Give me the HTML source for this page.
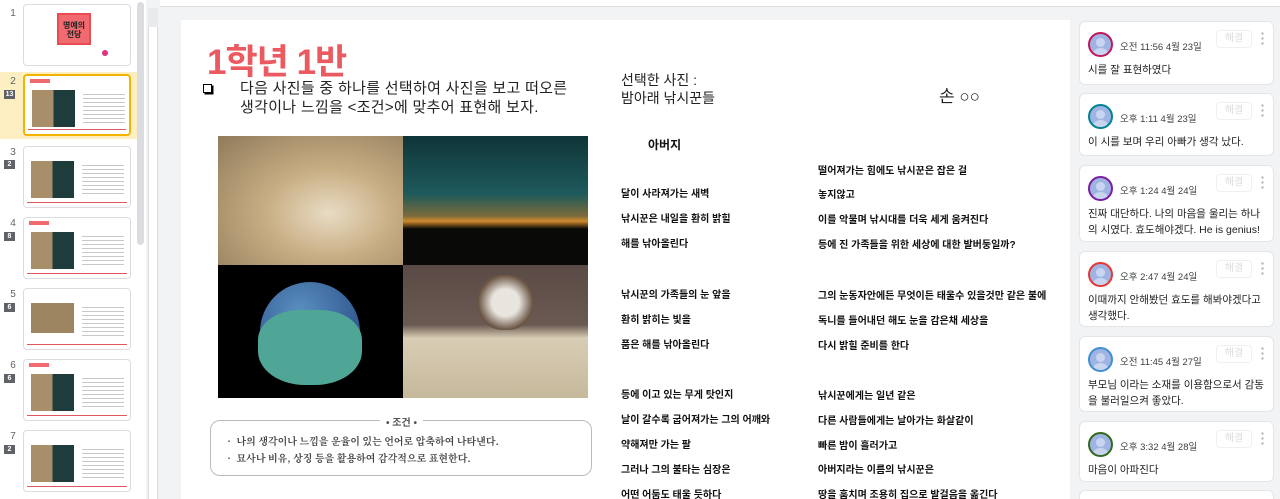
<!DOCTYPE html>
<html><head><meta charset="utf-8"><style>
*{margin:0;padding:0;box-sizing:border-box}
html,body{width:1280px;height:499px;overflow:hidden}
body{background:#f1f3f4;position:relative;font-family:"Liberation Sans","Noto Sans CJK KR",sans-serif}
.abs{position:absolute}
.film{left:0;top:0;width:146px;height:499px;background:#fff}
.num{font-size:10px;color:#5f6368;left:8px;width:10px;text-align:center}
.badge{left:4px;width:11px;height:9px;background:#5f6368;color:#fff;font-size:7px;font-weight:bold;text-align:center;line-height:9px}
.th{left:23px;width:108px;height:62px;background:#fff;border:1px solid #dadce0;border-radius:4px;overflow:hidden}
.th .rl{position:absolute;left:3px;right:3px;bottom:4px;height:1.5px;background:#e0575f}
.th .g{position:absolute;left:7px;top:14px;width:43px;height:37px}
.th .tx{position:absolute;left:58px;top:18px;width:42px;height:30px;background:repeating-linear-gradient(180deg,#c8c8c8 0 1px,transparent 1px 4px)}
.cm{left:1079px;width:195px;background:#fff;border:1px solid #e3e5e8;border-radius:6px}
.av{position:absolute;left:8px;top:10px;width:25px;height:25px;border-radius:50%;border:2px solid;background:#9fb4e3;overflow:hidden}
.av:after{content:"";position:absolute;left:6px;top:4px;width:9px;height:9px;border-radius:50%;background:#c9d5f0}
.av:before{content:"";position:absolute;left:3px;top:14px;width:15px;height:12px;border-radius:50% 50% 0 0;background:#c9d5f0}
.ct{position:absolute;left:40px;top:17px;font-size:9.5px;color:#3c4043}
.res{position:absolute;left:136px;top:8px;width:36px;height:18px;border:1px solid #f0f0f0;border-radius:4px;font-size:10px;color:#dadce0;text-align:center;line-height:16px}
.dots{position:absolute;left:181px;top:9px;width:3px;height:14px;background:radial-gradient(circle,#bdc1c6 1.2px,transparent 1.4px) 0 0/3px 5px}
.cb{position:absolute;left:8px;top:40px;right:8px;font-size:10.5px;color:#202124;line-height:16px}
.p{position:absolute;font-size:10px;font-weight:bold;color:#111;white-space:nowrap}
</style></head><body>
<div class="abs film"></div>
<div class="abs" style="left:0;top:72px;width:137px;height:67px;background:#feefc3"></div>
<div class="abs" style="left:137px;top:2px;width:7px;height:243px;background:#dadce0;border-radius:4px"></div>
<div class="abs num" style="top:8px">1</div>
<div class="abs th" style="top:4px"><div style="position:absolute;left:33px;top:8px;width:34px;height:32px;background:#f06a6f;border:2px solid #e94b53;color:#222;font-size:8px;font-weight:bold;text-align:center;line-height:9px;padding-top:6px">명예의<br>전당</div><div style="position:absolute;left:78px;top:45px;width:6px;height:6px;border-radius:50%;background:#e0307e"></div></div>
<div class="abs num" style="top:76px">2</div><div class="abs badge" style="top:90px">13</div>
<div class="abs th" style="top:74px;border:2px solid #f4b400"><div style="position:absolute;left:5px;top:3px;width:20px;height:4px;background:#f06a6f"></div><div class="g" style="background:linear-gradient(90deg,#a88f6a 50%,#1f3c3d 50%);"></div><div class="tx"></div><div class="rl"></div></div>
<div class="abs num" style="top:147px">3</div><div class="abs badge" style="top:160px">2</div>
<div class="abs th" style="top:146px"><div class="g" style="background:linear-gradient(90deg,#a88f6a 50%,#1f3c3d 50%)"></div><div class="tx"></div><div class="rl"></div></div>
<div class="abs num" style="top:218px">4</div><div class="abs badge" style="top:232px">8</div>
<div class="abs th" style="top:217px"><div style="position:absolute;left:5px;top:3px;width:20px;height:4px;background:#f06a6f"></div><div class="g" style="background:linear-gradient(90deg,#a88f6a 50%,#1f3c3d 50%)"></div><div class="tx"></div><div class="rl"></div></div>
<div class="abs num" style="top:289px">5</div><div class="abs badge" style="top:303px">6</div>
<div class="abs th" style="top:288px"><div class="g" style="background:#9c8560;height:30px"></div><div class="tx"></div><div class="rl"></div></div>
<div class="abs num" style="top:360px">6</div><div class="abs badge" style="top:374px">6</div>
<div class="abs th" style="top:359px"><div style="position:absolute;left:5px;top:3px;width:20px;height:4px;background:#f06a6f"></div><div class="g" style="background:linear-gradient(90deg,#a88f6a 50%,#1f3c3d 50%)"></div><div class="tx"></div><div class="rl"></div></div>
<div class="abs num" style="top:431px">7</div><div class="abs badge" style="top:445px">2</div>
<div class="abs th" style="top:430px"><div class="g" style="background:linear-gradient(90deg,#a88f6a 50%,#1f3c3d 50%)"></div><div class="tx"></div><div class="rl"></div></div>
<div class="abs" style="left:148px;top:8px;width:10px;height:491px;background:#fff;border-left:1px solid #dadce0;border-right:1px solid #dadce0"></div>
<div class="abs" style="left:148px;top:8px;width:10px;height:19px;background:#e8eaed"></div>
<div class="abs" style="left:160px;top:0;width:1120px;height:7px;background:#fff;border-bottom:1px solid #dadce0"></div>
<div class="abs" style="left:181px;top:20px;width:889px;height:479px;background:#fff"></div>
<div class="abs" style="left:207px;top:45px;font-size:35px;line-height:35px;font-weight:bold;color:#ec5a61;letter-spacing:-1px">1학년 1반</div>
<div class="abs" style="left:203px;top:84px;width:9px;height:9px;border:1.5px solid #000;box-shadow:1.5px 1.5px 0 #000"></div>
<div class="abs" style="left:240px;top:79px;font-size:15px;color:#222;line-height:19px;letter-spacing:0.3px">다음 사진들 중 하나를 선택하여 사진을 보고 떠오른<br>생각이나 느낌을 &lt;조건&gt;에 맞추어 표현해 보자.</div>
<div class="abs" style="left:218px;top:136px;width:185px;height:129px;background:radial-gradient(ellipse at 60% 60%,#e8dcc4 0,#c9ae84 40%,#8f7a5a 100%)"></div>
<div class="abs" style="left:403px;top:136px;width:185px;height:129px;background:linear-gradient(180deg,#0f3438 0%,#1e5a5c 45%,#7a6a3a 62%,#d18a2e 66%,#090a08 72%)"></div>
<div class="abs" style="left:218px;top:265px;width:185px;height:133px;background:#000"><div style="position:absolute;left:42px;top:17px;width:100px;height:100px;border-radius:50%;background:radial-gradient(circle at 40% 30%,#5b8fc0,#1d3f7a)"></div><div style="position:absolute;left:40px;top:45px;width:104px;height:75px;border-radius:40% 40% 45% 45%;background:#4fa596"></div></div>
<div class="abs" style="left:403px;top:265px;width:185px;height:133px;background:linear-gradient(180deg,#5a4a45 0%,#6b5a52 45%,#d8cdb5 55%,#c6b89a 100%)"><div style="position:absolute;left:75px;top:10px;width:55px;height:55px;border-radius:45%;background:radial-gradient(circle,#e8e4de 35%,#6a5544 70%)"></div></div>
<div class="abs" style="left:210px;top:420px;width:382px;height:56px;border:1.5px solid #bbb;border-radius:10px"></div>
<div class="abs" style="left:380px;top:414px;background:#fff;padding:0 6px;font-size:10px;color:#555;font-weight:bold">• 조건 •</div>
<div class="abs" style="left:224px;top:432px;font-size:10px;color:#444;font-weight:bold;line-height:17px;font-family:'Noto Serif CJK SC',serif">• 나의 생각이나 느낌을 운율이 있는 언어로 압축하여 나타낸다.<br>• 묘사나 비유, 상징 등을 활용하여 감각적으로 표현한다.</div>
<div class="abs" style="left:621px;top:71px;font-size:14px;color:#222;line-height:18px">선택한 사진 :<br>밤아래 낚시꾼들</div>
<div class="abs" style="left:939px;top:82px;font-size:17px;color:#222">손 ○○</div>
<div class="p" style="left:648px;top:136px;font-size:12px">아버지</div>
<div class="p" style="left:621px;top:185px">달이 사라져가는 새벽</div>
<div class="p" style="left:621px;top:210px">낚시꾼은 내일을 환히 밝힐</div>
<div class="p" style="left:621px;top:235px">해를 낚아올린다</div>
<div class="p" style="left:621px;top:286px">낚시꾼의 가족들의 눈 앞을</div>
<div class="p" style="left:621px;top:311px">환히 밝히는 빛을</div>
<div class="p" style="left:621px;top:336px">품은 해를 낚아올린다</div>
<div class="p" style="left:621px;top:386px">등에 이고 있는 무게 탓인지</div>
<div class="p" style="left:621px;top:411px">날이 갈수록 굽어져가는 그의 어깨와</div>
<div class="p" style="left:621px;top:436px">약해져만 가는 팔</div>
<div class="p" style="left:621px;top:461px">그러나 그의 불타는 심장은</div>
<div class="p" style="left:621px;top:486px">어떤 어둠도 태울 듯하다</div>
<div class="p" style="left:818px;top:162px">떨어져가는 힘에도 낚시꾼은 잡은 걸</div>
<div class="p" style="left:818px;top:186px">놓지않고</div>
<div class="p" style="left:818px;top:211px">이를 악물며 낚시대를 더욱 세게 움켜진다</div>
<div class="p" style="left:818px;top:236px">등에 진 가족들을 위한 세상에 대한 발버둥일까?</div>
<div class="p" style="left:818px;top:287px">그의 눈동자안에든 무엇이든 태울수 있을것만 같은 불에</div>
<div class="p" style="left:818px;top:312px">독니를 들어내던 해도 눈을 감은채 세상을</div>
<div class="p" style="left:818px;top:337px">다시 밝힐 준비를  한다</div>
<div class="p" style="left:818px;top:387px">낚시꾼에게는 일년 같은</div>
<div class="p" style="left:818px;top:412px">다른 사람들에게는 날아가는 화살같이</div>
<div class="p" style="left:818px;top:437px">빠른 밤이 흘러가고</div>
<div class="p" style="left:818px;top:461px">아버지라는 이름의 낚시꾼은</div>
<div class="p" style="left:818px;top:486px">땅을 훔치며 조용히 집으로 발걸음을 옮긴다</div>
<div class="abs" style="left:1072px;top:20px;width:208px;height:479px;background:#f1f3f4"></div>
<div class="abs cm" style="top:21px;height:64px"><div class="av" style="border-color:#c2185b"></div><div class="ct">오전 11:56 4월 23일</div><div class="res">해결</div><div class="dots"></div><div class="cb">시를 잘 표현하였다</div></div>
<div class="abs cm" style="top:93px;height:63px"><div class="av" style="border-color:#00838f"></div><div class="ct">오후 1:11 4월 23일</div><div class="res">해결</div><div class="dots"></div><div class="cb">이 시를 보며 우리 아빠가 생각 났다.</div></div>
<div class="abs cm" style="top:165px;height:77px"><div class="av" style="border-color:#7b1fa2"></div><div class="ct">오후 1:24 4월 24일</div><div class="res">해결</div><div class="dots"></div><div class="cb">진짜 대단하다. 나의 마음을 울리는 하나의 시였다. 효도해야겠다. He is genius!</div></div>
<div class="abs cm" style="top:251px;height:76px"><div class="av" style="border-color:#e53935"></div><div class="ct">오후 2:47 4월 24일</div><div class="res">해결</div><div class="dots"></div><div class="cb">이때까지 안해봤던 효도를 해봐야겠다고 생각했다.</div></div>
<div class="abs cm" style="top:336px;height:76px"><div class="av" style="border-color:#3f8fd2"></div><div class="ct">오전 11:45 4월 27일</div><div class="res">해결</div><div class="dots"></div><div class="cb">부모님 이라는 소재를 이용함으로서 감동을 불러일으켜 좋았다.</div></div>
<div class="abs cm" style="top:421px;height:61px"><div class="av" style="border-color:#33691e"></div><div class="ct">오후 3:32 4월 28일</div><div class="res">해결</div><div class="dots"></div><div class="cb">마음이 아파진다</div></div>
<div class="abs cm" style="top:490px;height:9px;border-bottom:none;border-radius:6px 6px 0 0"></div>
</body></html>
